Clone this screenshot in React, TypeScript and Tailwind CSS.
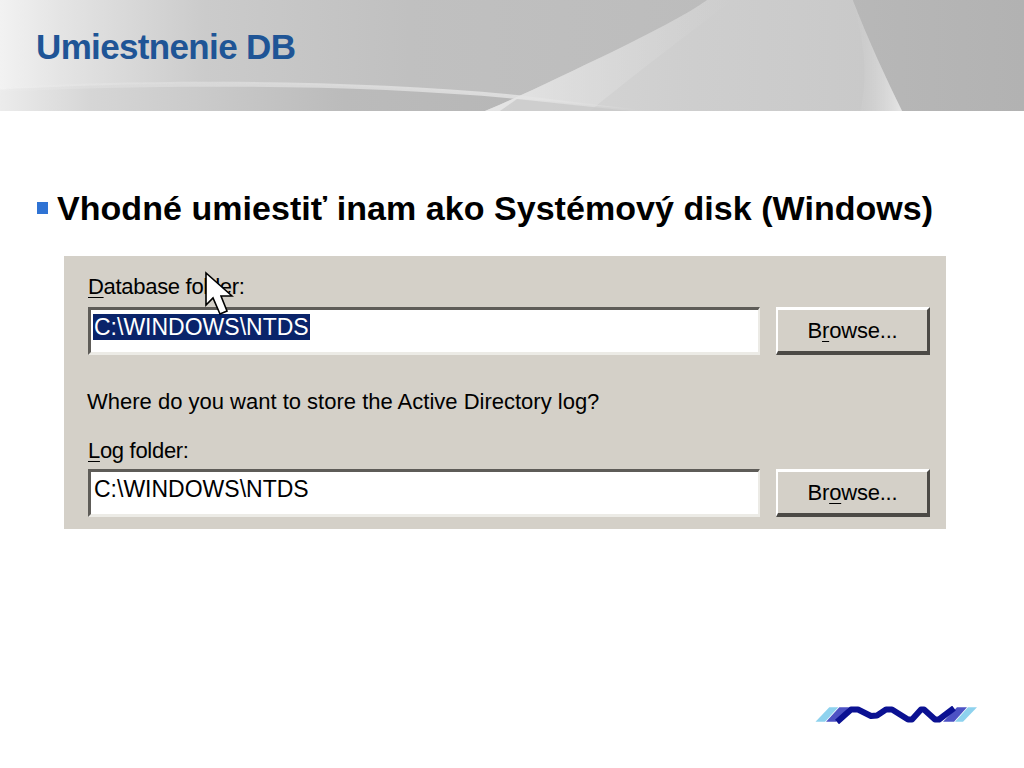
import React from "react";

const sans = { fontFamily: '"Liberation Sans", Arial, sans-serif' };

function HeaderArt() {
  return (
    <svg className="absolute inset-0 w-full h-full" viewBox="0 0 1024 111" preserveAspectRatio="none" aria-hidden="true">
      <defs>
        <linearGradient id="base" x1="0" y1="0" x2="1" y2="0">
          <stop offset="0" stopColor="#f2f2f2" />
          <stop offset="0.06" stopColor="#e4e4e4" />
          <stop offset="0.2" stopColor="#cbcbcb" />
          <stop offset="0.4" stopColor="#c0c0c0" />
          <stop offset="0.7" stopColor="#bcbcbc" />
          <stop offset="1" stopColor="#b2b2b2" />
        </linearGradient>
        <linearGradient id="lower" x1="0" y1="0" x2="1" y2="0">
          <stop offset="0" stopColor="#ededed" />
          <stop offset="0.15" stopColor="#d6d6d6" />
          <stop offset="0.55" stopColor="#bbbbbb" />
          <stop offset="1" stopColor="#b4b4b4" />
        </linearGradient>
        <linearGradient id="arc" x1="0" y1="0" x2="1" y2="0">
          <stop offset="0" stopColor="#f0f0f0" stopOpacity="0.1" />
          <stop offset="0.5" stopColor="#e6e6e6" stopOpacity="0.65" />
          <stop offset="0.85" stopColor="#e4e4e4" stopOpacity="0.85" />
          <stop offset="1" stopColor="#dddddd" stopOpacity="0.2" />
        </linearGradient>
        <linearGradient id="wedge" x1="0" y1="0" x2="1" y2="0">
          <stop offset="0" stopColor="#d8d8d8" />
          <stop offset="0.5" stopColor="#cecece" />
          <stop offset="1" stopColor="#c8c8c8" />
        </linearGradient>
        <linearGradient id="band" x1="0" y1="0" x2="1" y2="0">
          <stop offset="0" stopColor="#e6e6e6" stopOpacity="0.95" />
          <stop offset="1" stopColor="#d8d8d8" stopOpacity="0" />
        </linearGradient>
        <linearGradient id="sliver" x1="0" y1="0" x2="1" y2="0">
          <stop offset="0" stopColor="#d2d2d2" stopOpacity="0" />
          <stop offset="1" stopColor="#e8e8e8" stopOpacity="0.95" />
        </linearGradient>
        <filter id="soft">
          <feGaussianBlur stdDeviation="0.6" />
        </filter>
      </defs>
      <rect width="1024" height="111" fill="url(#base)" />
      <g filter="url(#soft)">
        <path d="M-5 90 C160 80 360 82 517 97 L630 111 L-5 111 Z" fill="url(#lower)" />
        <path d="M485 111 C530 92 570 72 610 53 C650 33 685 16 710 -2 L852 -2 C868 40 886 78 903 113 Z" fill="url(#wedge)" />
        <path d="M485 111 C530 92 570 72 610 53 C650 33 685 16 710 -2 L735 -2 C700 25 640 70 590 111 Z" fill="url(#band)" />
        <path d="M852 -2 C868 40 886 78 903 113 L860 113 C870 70 862 35 852 -2 Z" fill="url(#sliver)" />
        <path d="M-5 88 C160 78 360 80 517 95 L640 110 C590 106 550 100 517 99 C360 84 160 84 -5 92 Z" fill="url(#arc)" />
        <path d="M517 99 L630 111 L500 111 Z" fill="#c9c9c9" opacity="0.8" />
      </g>
    </svg>
  );
}

function Logo() {
  return (
    <svg width="164" height="18" viewBox="0 0 164 18" aria-hidden="true">
      <path d="M1.5 15.7 L15.3 1.3 L24.3 1.3 L11 15.7 Z" fill="#8ed2ee" />
      <path d="M12 15.7 L25.3 1.3 L35 1.3 L22 15.7 Z" fill="#4d52c4" />
      <path d="M129 15.7 L143 1.3 L153 1.3 L140 15.7 Z" fill="#4d52c4" />
      <path d="M141 15.7 L154 1.3 L163 1.3 L149 15.7 Z" fill="#8ed2ee" />
      <path
        d="M23 16 L37 3.5 L44 3.5 L57 10 L63 9.5 L72 3.5 L78 3.5 L94 13.5 L98 13.5 L107 3.5 L110 3.5 L121 13.5 L125 13.5 L140 2"
        fill="none"
        stroke="#0b1192"
        strokeWidth="6"
        strokeLinejoin="round"
        strokeLinecap="butt"
      />
    </svg>
  );
}

function Cursor() {
  return (
    <svg className="absolute left-[140px] top-[15px]" width="30" height="46" viewBox="0 0 30 46" aria-hidden="true">
      <path d="M2 2 L2 34 L9 27 L16 43 L23 40 L17 25 L28 25 Z" fill="#ffffff" stroke="#000000" strokeWidth="1.6" />
    </svg>
  );
}

function U({ children }: { children: React.ReactNode }) {
  return <span className="underline decoration-1 underline-offset-[3px]">{children}</span>;
}

function Field({ selected, children }: { selected?: boolean; children: React.ReactNode }) {
  return (
    <div className="flex items-stretch gap-[16px] h-[48px]">
      <div className="flex-1 bg-white border-t-[3px] border-l-[3px] border-r-[2px] border-b-[3px] border-t-[#5e5c58] border-l-[#5e5c58] border-r-[#ecebe6] border-b-[#ecebe6] pl-[2px] pt-[4px]">
        <span className={`inline-block h-[26px] leading-[26px] text-[23px] px-[1px] ${selected ? "bg-[#0a246a] text-white" : "text-black"}`}>
          C:\WINDOWS\NTDS
        </span>
      </div>
      <div className="w-[154px] flex items-center justify-center bg-[#d4d0c8] border-t-[3px] border-l-[2px] border-r-[3px] border-b-[4px] border-t-white border-l-white border-r-[#4c4a46] border-b-[#4c4a46] text-[22px] tracking-[-0.2px] text-black">
        <span>{children}</span>
      </div>
    </div>
  );
}

export default function App() {
  return (
    <div className="w-[1024px] h-[768px] bg-white flex flex-col overflow-hidden" style={sans}>
      <header className="relative h-[111px] shrink-0 flex items-center pl-[36px] pb-[17px]">
        <HeaderArt />
        <h1 className="relative text-[35px] font-bold text-[#1f5596] tracking-[-0.65px]">Umiestnenie DB</h1>
      </header>

      <div className="flex items-center mt-[76px] pl-[37px] h-[42px]">
        <span className="w-[11px] h-[12px] bg-[#2f73d4] mr-[9px]" />
        <p className="text-[34px] font-bold text-black whitespace-nowrap tracking-[0.05px]">Vhodné umiestiť inam ako Systémový disk (Windows)</p>
      </div>

      <section className="relative mt-[27px] ml-[64px] w-[882px] h-[273px] bg-[#d4d0c8] pl-[24px] pr-[16px] pt-[16px] text-black">
        <Cursor />
        <div className="text-[22px] tracking-[-0.3px] leading-[30px] mb-[5px]"><U>D</U>atabase folder:</div>
        <Field selected>B<U>r</U>owse...</Field>
        <div className="text-[22px] leading-[30px] mt-[32px] -ml-[1px]">Where do you want to store the Active Directory log?</div>
        <div className="text-[22px] tracking-[-0.3px] leading-[30px] mt-[19px] mb-[3px]"><U>L</U>og folder:</div>
        <Field>Br<U>o</U>wse...</Field>
      </section>

      <div className="mt-auto flex justify-end pr-[46px] pb-[44px]">
        <Logo />
      </div>
    </div>
  );
}
